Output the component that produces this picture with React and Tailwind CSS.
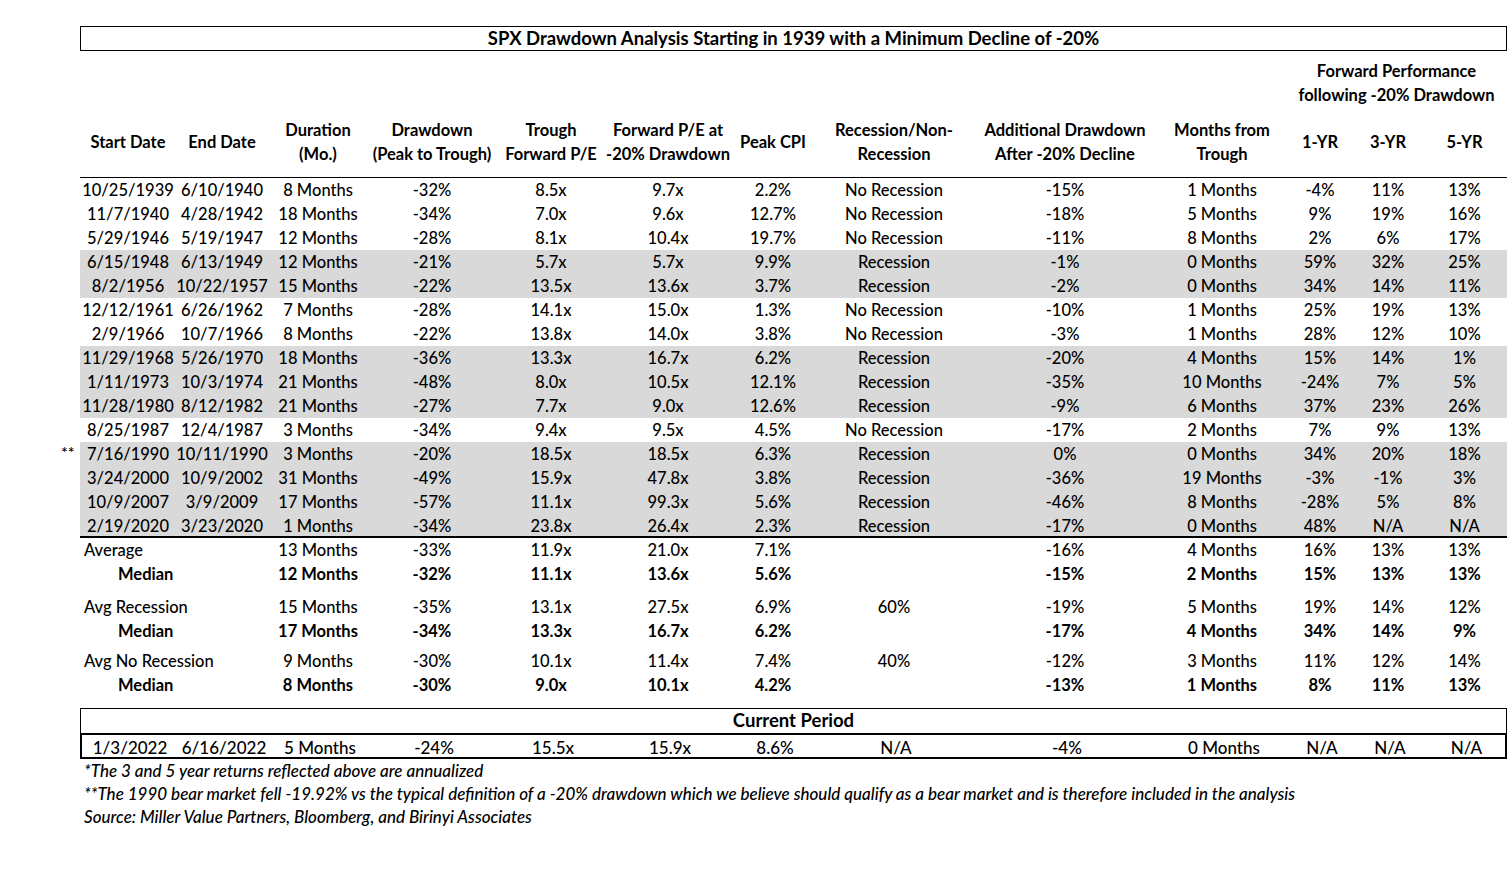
import React from 'react';

const COLS = 'grid grid-cols-[96px_92px_100px_128px_110px_124px_86px_156px_186px_128px_68px_68px_85px]';

const rows = [
  ['10/25/1939', '6/10/1940', '8 Months', '-32%', '8.5x', '9.7x', '2.2%', 'No Recession', '-15%', '1 Months', '-4%', '11%', '13%'],
  ['11/7/1940', '4/28/1942', '18 Months', '-34%', '7.0x', '9.6x', '12.7%', 'No Recession', '-18%', '5 Months', '9%', '19%', '16%'],
  ['5/29/1946', '5/19/1947', '12 Months', '-28%', '8.1x', '10.4x', '19.7%', 'No Recession', '-11%', '8 Months', '2%', '6%', '17%'],
  ['6/15/1948', '6/13/1949', '12 Months', '-21%', '5.7x', '5.7x', '9.9%', 'Recession', '-1%', '0 Months', '59%', '32%', '25%'],
  ['8/2/1956', '10/22/1957', '15 Months', '-22%', '13.5x', '13.6x', '3.7%', 'Recession', '-2%', '0 Months', '34%', '14%', '11%'],
  ['12/12/1961', '6/26/1962', '7 Months', '-28%', '14.1x', '15.0x', '1.3%', 'No Recession', '-10%', '1 Months', '25%', '19%', '13%'],
  ['2/9/1966', '10/7/1966', '8 Months', '-22%', '13.8x', '14.0x', '3.8%', 'No Recession', '-3%', '1 Months', '28%', '12%', '10%'],
  ['11/29/1968', '5/26/1970', '18 Months', '-36%', '13.3x', '16.7x', '6.2%', 'Recession', '-20%', '4 Months', '15%', '14%', '1%'],
  ['1/11/1973', '10/3/1974', '21 Months', '-48%', '8.0x', '10.5x', '12.1%', 'Recession', '-35%', '10 Months', '-24%', '7%', '5%'],
  ['11/28/1980', '8/12/1982', '21 Months', '-27%', '7.7x', '9.0x', '12.6%', 'Recession', '-9%', '6 Months', '37%', '23%', '26%'],
  ['8/25/1987', '12/4/1987', '3 Months', '-34%', '9.4x', '9.5x', '4.5%', 'No Recession', '-17%', '2 Months', '7%', '9%', '13%'],
  ['7/16/1990', '10/11/1990', '3 Months', '-20%', '18.5x', '18.5x', '6.3%', 'Recession', '0%', '0 Months', '34%', '20%', '18%'],
  ['3/24/2000', '10/9/2002', '31 Months', '-49%', '15.9x', '47.8x', '3.8%', 'Recession', '-36%', '19 Months', '-3%', '-1%', '3%'],
  ['10/9/2007', '3/9/2009', '17 Months', '-57%', '11.1x', '99.3x', '5.6%', 'Recession', '-46%', '8 Months', '-28%', '5%', '8%'],
  ['2/19/2020', '3/23/2020', '1 Months', '-34%', '23.8x', '26.4x', '2.3%', 'Recession', '-17%', '0 Months', '48%', 'N/A', 'N/A'],
];

// rows shaded grey in the sheet
const shaded = [3, 4, 7, 8, 9, 11, 12, 13, 14];

const summary = [
  { label: 'Average', values: ['13 Months', '-33%', '11.9x', '21.0x', '7.1%', '', '-16%', '4 Months', '16%', '13%', '13%'] },
  { label: 'Median', bold: true, values: ['12 Months', '-32%', '11.1x', '13.6x', '5.6%', '', '-15%', '2 Months', '15%', '13%', '13%'] },
  { label: 'Avg Recession', gap: 'mt-[9px]', values: ['15 Months', '-35%', '13.1x', '27.5x', '6.9%', '60%', '-19%', '5 Months', '19%', '14%', '12%'] },
  { label: 'Median', bold: true, values: ['17 Months', '-34%', '13.3x', '16.7x', '6.2%', '', '-17%', '4 Months', '34%', '14%', '9%'] },
  { label: 'Avg No Recession', gap: 'mt-[6px]', values: ['9 Months', '-30%', '10.1x', '11.4x', '7.4%', '40%', '-12%', '3 Months', '11%', '12%', '14%'] },
  { label: 'Median', bold: true, values: ['8 Months', '-30%', '9.0x', '10.1x', '4.2%', '', '-13%', '1 Months', '8%', '11%', '13%'] },
];

const current = ['1/3/2022', '6/16/2022', '5 Months', '-24%', '15.5x', '15.9x', '8.6%', 'N/A', '-4%', '0 Months', 'N/A', 'N/A', 'N/A'];

const headers = [
  ['Start Date'],
  ['End Date'],
  ['Duration', '(Mo.)'],
  ['Drawdown', '(Peak to Trough)'],
  ['Trough', 'Forward P/E'],
  ['Forward P/E at', '-20% Drawdown'],
  ['Peak CPI'],
  ['Recession/Non-', 'Recession'],
  ['Additional Drawdown', 'After -20% Decline'],
  ['Months from', 'Trough'],
  ['1-YR'],
  ['3-YR'],
  ['5-YR'],
];

const Cell = ({ children }) => (
  <div className="flex justify-center whitespace-nowrap">{children}</div>
);

export default function App() {
  return (
    <div className="min-h-screen bg-white text-black text-[16.5px] font-medium font-['Lato','Open_Sans',sans-serif]">
      <div className="pt-[26px] pl-[80px] w-[1507px]">
        <div className="h-[25px] border border-black flex items-center justify-center font-bold text-[18.5px]">
          SPX Drawdown Analysis Starting in 1939 with a Minimum Decline of -20%
        </div>

        <div className={`${COLS} pt-[8px]`}>
          <div className="col-start-11 col-span-3 flex flex-col items-center font-bold leading-[24px] whitespace-nowrap">
            <span>Forward Performance</span>
            <span>following -20% Drawdown</span>
          </div>
        </div>

        <div className={`${COLS} h-[71px] border-b border-black font-bold leading-[24px]`}>
          {headers.map((h, i) => (
            <div key={i} className="flex flex-col items-center justify-center whitespace-nowrap">
              {h.map((line) => (
                <span key={line}>{line}</span>
              ))}
            </div>
          ))}
        </div>

        {rows.map((r, i) => (
          <div
            key={i}
            className={`${COLS} relative h-[24px] items-center ${shaded.includes(i) ? 'bg-[#d9d9d9]' : ''} ${i === rows.length - 1 ? 'border-b-2 border-black' : ''}`}
          >
            {i === 11 && (
              <span className="absolute left-[-19px] top-[2px] text-[16px] leading-[16px]">**</span>
            )}
            {r.map((v, j) => (
              <Cell key={j}>{v}</Cell>
            ))}
          </div>
        ))}

        {summary.map((s, i) => (
          <div key={i} className={`${COLS} h-[24px] items-center ${s.gap || ''} ${s.bold ? 'font-bold' : ''}`}>
            <div className={`col-span-2 whitespace-nowrap ${s.bold ? 'pl-[38px]' : 'pl-[4px]'}`}>{s.label}</div>
            {s.values.map((v, j) => (
              <Cell key={j}>{v}</Cell>
            ))}
          </div>
        ))}

        <div className="mt-[11px] border-t border-l border-r border-black h-[25px] flex items-center justify-center font-bold text-[18.5px]">
          Current Period
        </div>
        <div className={`${COLS} h-[26px] items-center border-2 border-black text-[17px]`}>
          {current.map((v, j) => (
            <Cell key={j}>{v}</Cell>
          ))}
        </div>

        <div className="pl-[4px] italic text-[17px] leading-[23px]">
          <p>*The 3 and 5 year returns reflected above are annualized</p>
          <p>
            **The 1990 bear market fell -19.92% vs the typical definition of a -20% drawdown which we believe should
            qualify as a bear market and is therefore included in the analysis
          </p>
          <p>Source: Miller Value Partners, Bloomberg, and Birinyi Associates</p>
        </div>
      </div>
    </div>
  );
}
